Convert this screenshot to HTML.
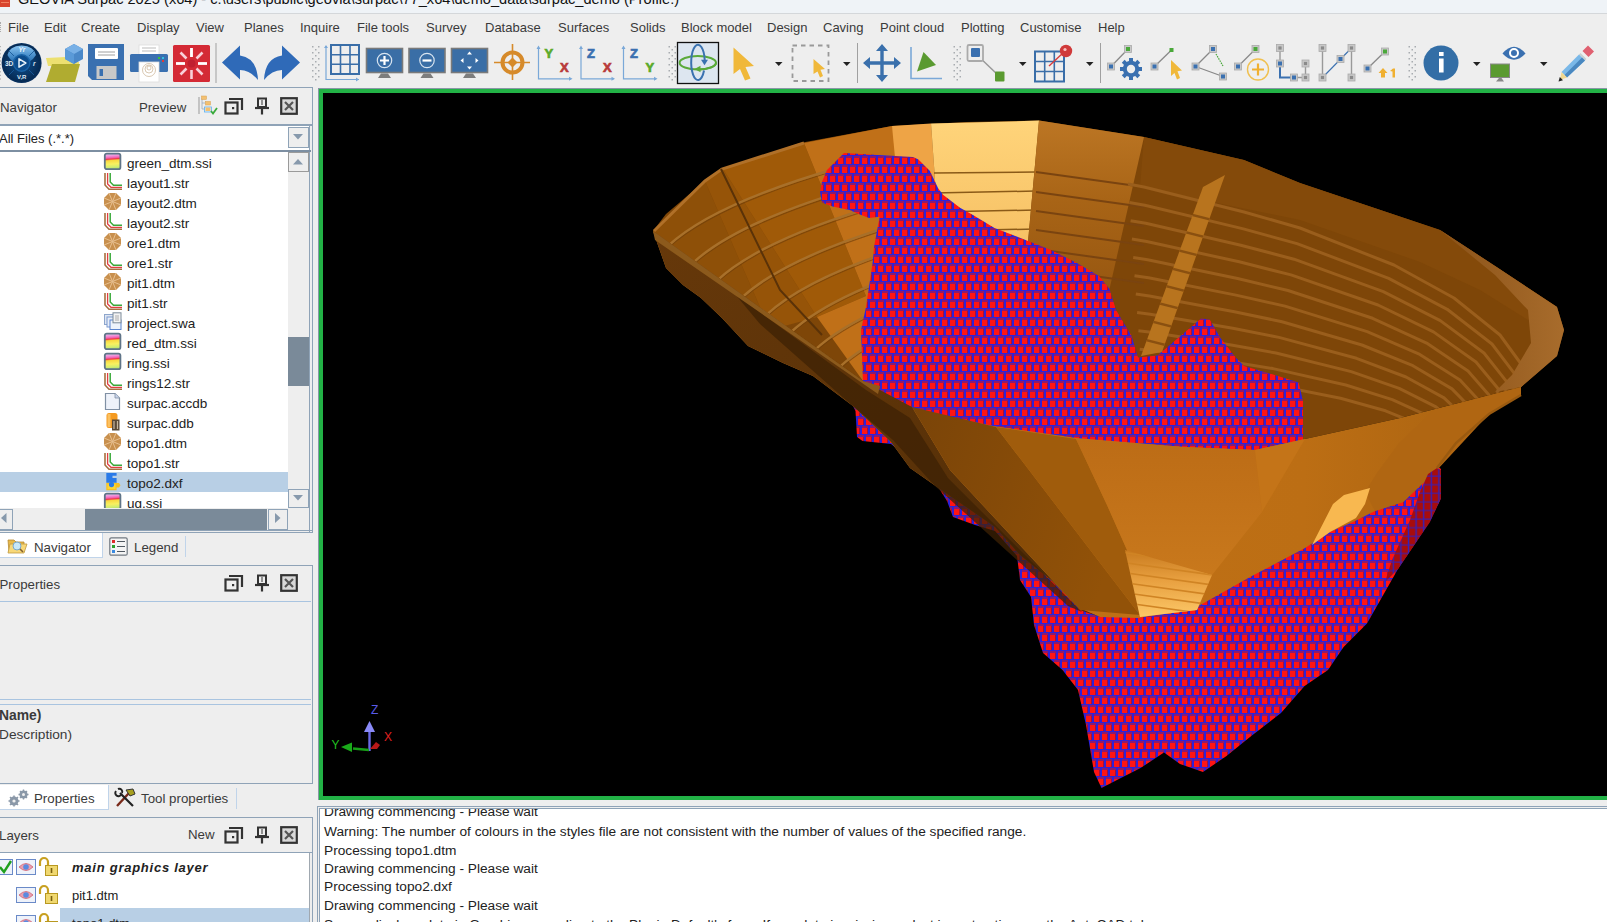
<!DOCTYPE html>
<html><head><meta charset="utf-8">
<style>
*{margin:0;padding:0;box-sizing:border-box}
html,body{width:1607px;height:922px;overflow:hidden;background:#eeeeee;font-family:"Liberation Sans",sans-serif;color:#333;}
.a{position:absolute}
svg.a{overflow:visible}
.t{position:absolute;white-space:nowrap;font-size:13px;line-height:13px}
.menu .t{top:21px;color:#3a3a3a}
.list .t{color:#222;font-size:13.5px}
.msg .t{color:#222;font-size:13.7px}
.hdr{color:#3a3a3a;font-size:13.3px}
</style></head><body>
<svg width="0" height="0" style="position:absolute">
<defs>
 <linearGradient id="g_ssi" x1="0" y1="0" x2="0.08" y2="1">
  <stop offset="0" stop-color="#d8d0f0"/><stop offset="0.18" stop-color="#f090d8"/><stop offset="0.3" stop-color="#f060b0"/><stop offset="0.38" stop-color="#f03848"/>
  <stop offset="0.47" stop-color="#f8d840"/><stop offset="0.7" stop-color="#f8f060"/><stop offset="0.9" stop-color="#d0ec70"/><stop offset="1" stop-color="#b0e070"/>
 </linearGradient>
 <symbol id="ic_ssi" viewBox="0 0 20 19">
  <rect x="1.8" y="1.6" width="15.6" height="15.6" rx="2" fill="url(#g_ssi)" stroke="#5f7488" stroke-width="1.8"/>
 </symbol>
 <symbol id="ic_str" viewBox="0 0 20 19">
  <path d="M2,1 V13 L6,17.3 H19" fill="none" stroke="#a87040" stroke-width="1.6"/>
  <path d="M4.6,1 V12 L8,15.3 H19" fill="none" stroke="#e04040" stroke-width="1.3"/>
  <path d="M7.2,1 V10 L10.5,13.3 H19" fill="none" stroke="#3aaa3a" stroke-width="1.5"/>
 </symbol>
 <symbol id="ic_dtm" viewBox="0 0 20 19">
  <path d="M6,1 H13 L18,6 V13 L13,18 H6 L1,13 V6 Z" fill="#c8904e"/>
  <path d="M6,1 L9.5,9.5 L13,1 M18,6 L9.5,9.5 L18,13 M13,18 L9.5,9.5 L6,18 M1,13 L9.5,9.5 L1,6" fill="none" stroke="#e8c090" stroke-width="1"/>
 </symbol>
 <symbol id="ic_swa" viewBox="0 0 20 19">
  <rect x="1.5" y="2.5" width="9" height="10" fill="#dfe6f2" stroke="#8ea6cc"/>
  <rect x="4" y="5" width="9" height="10" fill="#e8eef8" stroke="#7d9ad0"/>
  <rect x="7" y="8" width="11" height="9.5" fill="#eef3fb" stroke="#5b84cf"/>
  <rect x="10" y="0.8" width="8" height="10" fill="#f3f3f3" stroke="#7d8b99"/>
  <path d="M12,4 H16 M12,6 H16 M12,8 H16" stroke="#999" stroke-width="0.8"/>
 </symbol>
 <symbol id="ic_accdb" viewBox="0 0 20 19">
  <path d="M2.5,1.5 H12 L16.5,6 V17.5 H2.5 Z" fill="#eef2fa" stroke="#8090a4" stroke-width="1.2"/>
  <path d="M12,1.5 V6 H16.5" fill="#c8d4ea" stroke="#8090a4" stroke-width="0.8"/>
 </symbol>
 <symbol id="ic_ddb" viewBox="0 0 20 19">
  <rect x="3.5" y="1" width="11" height="15" rx="2.5" fill="#f59a20"/>
  <rect x="4.5" y="2" width="3" height="13" fill="#fbc060"/>
  <rect x="9" y="7.5" width="7.5" height="11" fill="#5a4a38"/>
  <path d="M11,9 V17 M14.5,9 V17" stroke="#c8b8a0" stroke-width="1.2"/>
 </symbol>
 <symbol id="ic_dxf" viewBox="0 0 20 19">
  <path d="M3.3,10.8 H14 V11 H16 L17.5,13.3 L16,15.6 H13.6 V18.3 H3.3 Z" fill="#f8c020"/>
  <path d="M4.5,12 H12.5 V17 H4.5 Z" fill="#fbe040" opacity="0.7"/>
  <path d="M3.3,1.1 H13.6 V3.8 H9.5 V6 H13.6 V10.8 H3.3 Z" fill="#2a7ae8"/>
  <circle cx="8.5" cy="12.6" r="2.6" fill="#2a7ae8"/>
 </symbol>
 <symbol id="ic_float" viewBox="0 0 20 18">
  <rect x="1.5" y="5.5" width="12" height="11" fill="none" stroke="#333" stroke-width="2.2"/>
  <path d="M5,2 H18 V13" fill="none" stroke="#333" stroke-width="2.2"/>
  <rect x="8" y="10" width="2.2" height="2.2" fill="#333"/>
 </symbol>
 <symbol id="ic_pin" viewBox="0 0 16 18">
  <path d="M4,1.5 H12 V10 H4 Z" fill="none" stroke="#333" stroke-width="2"/>
  <path d="M1,11 H15" stroke="#333" stroke-width="2.2"/>
  <path d="M8,11 V17.5" stroke="#333" stroke-width="2.2"/>
  <path d="M8,3 V8" stroke="#333" stroke-width="1"/>
 </symbol>
 <symbol id="ic_close" viewBox="0 0 18 18">
  <rect x="1.2" y="1.2" width="15.6" height="15.6" fill="#d8d8d8" stroke="#333" stroke-width="2.2"/>
  <path d="M5,5 L13,13 M13,5 L5,13" stroke="#555" stroke-width="2.2"/>
 </symbol>
 <pattern id="blk" width="8" height="18" patternUnits="userSpaceOnUse" x="1" y="2">
  <rect width="8" height="18" fill="#3020d8"/>
  <rect x="1" y="1" width="6" height="2" fill="#8a1a70"/>
  <rect x="1" y="3" width="5" height="6" fill="#ff1414"/>
  <rect x="6" y="3" width="1" height="6" fill="#a01040"/>
  <rect x="0" y="10" width="3" height="2" fill="#8a1a70"/><rect x="5" y="10" width="3" height="2" fill="#8a1a70"/>
  <rect x="0" y="12" width="2" height="6" fill="#ff1414"/><rect x="5" y="12" width="3" height="6" fill="#ff1414"/>
  <rect x="2" y="12" width="1" height="6" fill="#a01040"/>
 </pattern>
<pattern id="blkD" width="7.6" height="8.6" patternUnits="userSpaceOnUse" x="2" y="3">
  <rect width="7.6" height="8.6" fill="#3020c0"/>
  <rect x="1.2" y="0.6" width="6.2" height="7.6" fill="#a80c0c"/>
 </pattern>
</defs></svg>

<div class="a" style="left:0;top:0;width:1607px;height:13px;background:#eff3f7;overflow:hidden">
 <div class="a" style="left:0;top:0;width:10px;height:7px;background:#d9452f"></div>
 <div class="a" style="left:1px;top:2px;width:8px;height:1px;background:#f08060"></div>
 <div class="t" style="left:18px;top:-8.4px;font-size:14.6px;line-height:14.6px;color:#111">GEOVIA Surpac 2025 (x64) - c:\users\public\geovia\surpac\77_x64\demo_data\surpac_demo (Profile:)</div>
</div>
<div class="a" style="left:0;top:13px;width:1607px;height:1px;background:#d4d7da"></div>
<div class="menu">
<div class="a" style="left:0;top:22px;width:1px;height:10px;border-left:1px dotted #aaa"></div>
<div class="t" style="left:8px">File</div>
<div class="t" style="left:44px">Edit</div>
<div class="t" style="left:81px">Create</div>
<div class="t" style="left:137px">Display</div>
<div class="t" style="left:196px">View</div>
<div class="t" style="left:244px">Planes</div>
<div class="t" style="left:300px">Inquire</div>
<div class="t" style="left:357px">File tools</div>
<div class="t" style="left:426px">Survey</div>
<div class="t" style="left:485px">Database</div>
<div class="t" style="left:558px">Surfaces</div>
<div class="t" style="left:630px">Solids</div>
<div class="t" style="left:681px">Block model</div>
<div class="t" style="left:767px">Design</div>
<div class="t" style="left:823px">Caving</div>
<div class="t" style="left:880px">Point cloud</div>
<div class="t" style="left:961px">Plotting</div>
<div class="t" style="left:1020px">Customise</div>
<div class="t" style="left:1098px">Help</div>
</div>

<svg class="a" style="left:0;top:0" width="1607" height="88" viewBox="0 0 1607 88">
<defs>
 <radialGradient id="cmp2" cx="0.5" cy="0.5" r="0.5">
  <stop offset="0" stop-color="#0e4a86"/><stop offset="0.6" stop-color="#0a3a6c"/><stop offset="1" stop-color="#062a52"/>
 </radialGradient>
 <linearGradient id="cmpTop" x1="0" y1="0" x2="0" y2="1">
  <stop offset="0" stop-color="#8ac4f0"/><stop offset="0.6" stop-color="#4a90cc"/><stop offset="1" stop-color="#2a70b0"/>
 </linearGradient>
 <g id="grip" fill="#a8acb0"><rect x="0.5" y="0" width="1.5" height="1.5"/><rect x="6.5" y="0" width="1.5" height="1.5"/><rect x="3.5" y="3" width="1.5" height="1.5"/><rect x="0.5" y="6" width="1.5" height="1.5"/><rect x="6.5" y="6" width="1.5" height="1.5"/><rect x="3.5" y="9" width="1.5" height="1.5"/><rect x="0.5" y="12" width="1.5" height="1.5"/><rect x="6.5" y="12" width="1.5" height="1.5"/><rect x="3.5" y="15" width="1.5" height="1.5"/><rect x="0.5" y="18" width="1.5" height="1.5"/><rect x="6.5" y="18" width="1.5" height="1.5"/><rect x="3.5" y="21" width="1.5" height="1.5"/><rect x="0.5" y="24" width="1.5" height="1.5"/><rect x="6.5" y="24" width="1.5" height="1.5"/><rect x="3.5" y="27" width="1.5" height="1.5"/><rect x="0.5" y="30" width="1.5" height="1.5"/><rect x="6.5" y="30" width="1.5" height="1.5"/><rect x="3.5" y="33" width="1.5" height="1.5"/></g>
 <g id="mon"><rect x="0.5" y="0.5" width="36" height="24" fill="#3a6ea6" stroke="#7a7a7a" stroke-width="1.6"/><path d="M12,30 L15,25.5 H22 L25,30 Z" fill="#7d7d7d"/></g>
 <g id="dd"><path d="M0,0 H7.5 L3.75,4 Z" fill="#222"/></g>
 <g id="sq"><rect x="-3.5" y="-3.5" width="7" height="7" fill="#c8c8c8" stroke="#aaa" stroke-width="0.8"/><rect x="-2" y="-2" width="4" height="4" fill="#3a70b0"/></g>
 <g id="sqg"><rect x="-3.5" y="-3.5" width="7" height="7" fill="#c8c8c8" stroke="#aaa" stroke-width="0.8"/><rect x="-2" y="-2" width="4" height="4" fill="#4aa83a"/></g>
 <g id="sqx"><rect x="-3.5" y="-3.5" width="7" height="7" fill="#c8c8c8" stroke="#aaa" stroke-width="0.8"/><rect x="-1.6" y="-1.6" width="3.2" height="3.2" fill="#8a8a8a"/></g>
</defs>
<!-- grip at start of menu/toolbar -->
<path d="M0.5,46 V82" stroke="#b0b0b0" stroke-width="1" stroke-dasharray="1.2,2.4"/>
<!-- 1 compass -->
<circle cx="21.6" cy="63" r="20" fill="#08305e"/>
<circle cx="21.6" cy="63" r="19" fill="url(#cmp2)"/>
<path d="M7.5,55 Q9,46 21.6,45.5 Q34,46 36,55 Q33,60 29,62 A8.5,8.5 0 0 0 14,62 Q10,60 7.5,55 Z" fill="url(#cmpTop)"/>
<circle cx="21.6" cy="63" r="8.2" fill="#0c4c8c" stroke="#1a64a8" stroke-width="1.4"/>
<path d="M19,58.8 L25.8,63 L19,67.2 Z" fill="none" stroke="#e8f2fa" stroke-width="1.5" stroke-linejoin="round"/>
<path d="M9,51 L14,56 M34,51 L29,56 M9,75 L14,70 M34,75 L29,70" stroke="#1a5a98" stroke-width="0.9"/>
<text x="5" y="66" font-size="6.5" font-weight="bold" fill="#dfeaf6" font-family="Liberation Sans">3D</text>
<text x="17" y="79" font-size="6" font-weight="bold" fill="#dfeaf6" font-family="Liberation Sans">V,R</text>
<text x="18.5" y="51.5" font-size="6.5" font-style="italic" font-weight="bold" fill="#eef6fc" font-family="Liberation Sans">Yr</text>
<text x="33" y="66" font-size="6.5" font-style="italic" font-weight="bold" fill="#dfeaf6" font-family="Liberation Sans">r</text>
<!-- 2 folder + cube -->
<path d="M46,58 L66,57 L70,62 H79 L79,66 H48 Z" fill="#ece070"/>
<path d="M46,82 L52,64 H80 L75,82 Z" fill="#b0ac30"/>
<path d="M74,44 L83,49 L83,59 L74,64 L65,59 L65,49 Z" fill="#4a88c8"/>
<path d="M74,44 L83,49 L74,54 L65,49 Z" fill="#78b0e6"/>
<path d="M74,54 L74,64 L65,59 L65,49 Z" fill="#5a9ad8"/>
<!-- 3 save -->
<path d="M88,44 H124 V80 H92 L88,76 Z" fill="#3a70b0"/>
<rect x="95" y="48" width="23" height="11" rx="1" fill="#fff"/>
<path d="M98,52 H115 M98,55 H115" stroke="#a0a0a0" stroke-width="1"/>
<rect x="96.5" y="66" width="20" height="13" fill="#c8c8c8"/>
<rect x="99.5" y="69" width="3.5" height="7" fill="#3a70b0"/>
<!-- 4 printer -->
<rect x="139" y="45" width="20" height="10" fill="#fff" stroke="#ddd" stroke-width="0.8"/>
<path d="M142,48 H156 M142,51 H156" stroke="#aaa" stroke-width="0.8"/>
<rect x="130" y="54" width="38" height="18" rx="1.5" fill="#3a70b0"/>
<rect x="139" y="62" width="20" height="20" fill="#fff" stroke="#ddd" stroke-width="0.8"/>
<circle cx="149" cy="68" r="2" fill="none" stroke="#c8b090" stroke-width="0.7"/>
<circle cx="149" cy="69" r="4" fill="none" stroke="#c8b090" stroke-width="0.7"/>
<circle cx="149" cy="70" r="6.5" fill="none" stroke="#c8b090" stroke-width="0.7"/>
<rect x="158" y="57" width="2" height="2" fill="#3ac03a"/><rect x="162" y="57" width="2" height="2" fill="#30c0e0"/><rect x="162" y="60" width="2" height="2" fill="#e03a3a"/>
<!-- 5 red -->
<rect x="173" y="45" width="37" height="37" rx="1.5" fill="#d42a35"/>
<circle cx="191.5" cy="63.5" r="4" fill="#c02030"/>
<g stroke="#f8d0d8" stroke-width="2.6" stroke-linecap="butt">
<path d="M191.5,48 V57 M191.5,70 V79 M176,63.5 H185 M198,63.5 H207 M180.5,52.5 L186.5,58.5 M196.5,68.5 L202.5,74.5 M202.5,52.5 L196.5,58.5 M186.5,68.5 L180.5,74.5"/>
</g>
<g stroke="#ffffff" stroke-width="2.6"><path d="M191.5,48 V57 M198,63.5 H207 M176,63.5 H185"/></g>
<!-- sep -->
<path d="M216,43 V83" stroke="#a0a0a0" stroke-width="1"/>
<!-- 7 undo -->
<path d="M222,62.5 L240,45.5 V55.5 Q257,58 258,80 Q250,70 240,70 V79.5 Z" fill="#2f6ab8"/>
<!-- 8 redo -->
<path d="M300,62.5 L282,45.5 V55.5 Q265,58 264,80 Q272,70 282,70 V79.5 Z" fill="#2f6ab8"/>
<!-- grip -->
<use href="#grip" x="311.5" y="46"/>
<!-- 10 grid -->
<path d="M326,80 V46 M326,79.5 H359" stroke="#7aa8d8" stroke-width="1.2"/>
<path d="M324,48 L326,45 L328,48 Z M356,77.5 L359,79.5 L356,81.5 Z" fill="#7aa8d8"/>
<rect x="331" y="45" width="28" height="29" fill="none" stroke="#3a6ea8" stroke-width="2"/>
<path d="M340.5,45 V74 M350,45 V74 M331,54.7 H359 M331,64.3 H359" stroke="#3a6ea8" stroke-width="1.6"/>
<!-- 11-13 monitors -->
<use href="#mon" x="366" y="48"/>
<circle cx="384.5" cy="60.5" r="7.2" fill="none" stroke="#d8e4f0" stroke-width="1.2"/>
<path d="M384.5,56 V65 M380,60.5 H389" stroke="#fff" stroke-width="2.2"/>
<use href="#mon" x="408.5" y="48"/>
<circle cx="427" cy="60.5" r="7.2" fill="none" stroke="#d8e4f0" stroke-width="1.2"/>
<path d="M422.5,60.5 H431.5" stroke="#fff" stroke-width="2.2"/>
<use href="#mon" x="451" y="48"/>
<path d="M469.5,51.5 L472,54.5 H467 Z M469.5,69.5 L472,66.5 H467 Z M460.5,60.5 L463.5,58 V63 Z M478.5,60.5 L475.5,58 V63 Z" fill="#fff"/>
<!-- 14 target -->
<path d="M512.5,44 V80 M494,62.5 H530" stroke="#d68a2a" stroke-width="1.6"/>
<circle cx="512.5" cy="62.5" r="10" fill="none" stroke="#d68a2a" stroke-width="4"/>
<path d="M512.5,57.5 L517.5,62.5 L512.5,67.5 L507.5,62.5 Z" fill="#d68a2a"/>
<!-- 15-17 axes -->
<g id="axis"><path d="M538.5,47 V78.8 H571" stroke="#7aa8d8" stroke-width="1.2" fill="none"/><path d="M536.5,49 L538.5,45.5 L540.5,49 Z M569,76.8 L572.5,78.8 L569,80.8 Z" fill="#7aa8d8"/></g>
<use href="#axis" x="42.5"/><use href="#axis" x="85"/>
<text x="544.5" y="58" font-size="13" font-weight="bold" stroke-width="0.7" stroke="#5aaa2a" fill="#5aaa2a" font-family="Liberation Sans">Y</text>
<text x="560" y="72" font-size="13" font-weight="bold" stroke-width="0.7" stroke="#b83a3a" fill="#b83a3a" font-family="Liberation Sans">X</text>
<text x="587" y="58" font-size="13" font-weight="bold" stroke-width="0.7" stroke="#3a70b0" fill="#3a70b0" font-family="Liberation Sans">Z</text>
<text x="603" y="72" font-size="13" font-weight="bold" stroke-width="0.7" stroke="#b83a3a" fill="#b83a3a" font-family="Liberation Sans">X</text>
<text x="630" y="58" font-size="13" font-weight="bold" stroke-width="0.7" stroke="#3a70b0" fill="#3a70b0" font-family="Liberation Sans">Z</text>
<text x="645.5" y="72" font-size="13" font-weight="bold" stroke-width="0.7" stroke="#5aaa2a" fill="#5aaa2a" font-family="Liberation Sans">Y</text>
<use href="#grip" x="668" y="46"/>
<!-- 19 rotate -->
<rect x="677.5" y="42.5" width="41" height="41" fill="#dde6f0" stroke="#111" stroke-width="1.3"/>
<ellipse cx="697.8" cy="62.8" rx="18.2" ry="6.7" fill="none" stroke="#5aaa3a" stroke-width="2"/>
<path d="M704.76,60.5 A6.8,17.7 0 1 0 704.03,70.5" fill="none" stroke="#3a72b0" stroke-width="2"/>
<path d="M716.0,62.8 A18.2,6.7 0 0 1 699.5,69.47" fill="none" stroke="#5aaa3a" stroke-width="2"/>
<path d="M701,59.8 L708,59.8 L704.5,65.3 Z" fill="#3a72b0"/>
<path d="M694.5,69 L700.5,65.8 L700.5,72.2 Z" fill="#5aaa3a"/>
<!-- 20 cursor -->
<path d="M733.5,47.5 L754,66 L745.5,67 L750.5,78.5 L745,80.5 L740,69 L733.5,74 Z" fill="#f0b83a"/>
<use href="#dd" x="775" y="62"/>
<!-- 22 dashed box -->
<rect x="792.5" y="45.5" width="36" height="35.5" fill="none" stroke="#999" stroke-width="1.8" stroke-dasharray="4.5,4"/>
<path d="M813.5,59 L825,69 L820.5,69.8 L823,76 L820,77.5 L817.5,71.5 L813.5,74 Z" fill="#f0b83a"/>
<use href="#dd" x="843" y="62"/>
<path d="M857.5,43 V83" stroke="#a0a0a0" stroke-width="1"/>
<!-- 25 move -->
<path d="M882,47 V79 M866,63 H898" stroke="#3a70ac" stroke-width="3.4"/>
<path d="M882,44 L888,51 H876 Z M882,82 L888,75 H876 Z M863,63 L870,57 V69 Z M901,63 L894,57 V69 Z" fill="#3a70ac"/>
<!-- 26 axis-triangle -->
<path d="M911,47 V78.5 H942" stroke="#7aa8d8" stroke-width="1.6" fill="none"/>
<path d="M917,71.5 L923.5,52 L936,65 Z" fill="#5a9a30"/>
<use href="#grip" x="953" y="46"/>
<!-- 28 line squares -->
<path d="M976,54 L999,76" stroke="#999" stroke-width="1.5"/>
<rect x="967.5" y="45" width="15.5" height="16" rx="1.5" fill="#eee" stroke="#aaa" stroke-width="1.8"/>
<rect x="971" y="48" width="9" height="9" rx="1" fill="#3a70b0"/>
<rect x="995" y="71.5" width="9.5" height="10" rx="1" fill="#5a9a30"/>
<use href="#dd" x="1019" y="62"/>
<!-- 30 grid pin -->
<rect x="1035" y="51.5" width="29" height="30" fill="none" stroke="#3a6ea8" stroke-width="2"/>
<path d="M1044.7,51.5 V81.5 M1054.3,51.5 V81.5 M1035,61.5 H1064 M1035,71.5 H1064" stroke="#3a6ea8" stroke-width="1.6"/>
<path d="M1049,66 L1063,53" stroke="#d83a3a" stroke-width="1.4"/>
<circle cx="1066" cy="51" r="6.2" fill="#d03a3a"/>
<circle cx="1065" cy="49.5" r="1.6" fill="#f8c0c0"/>
<use href="#dd" x="1086" y="62"/>
<path d="M1100.5,43 V83" stroke="#a0a0a0" stroke-width="1"/>
<!-- 33 line-gear -->
<path d="M1111,66.5 L1128,49" stroke="#888" stroke-width="1.3"/>
<use href="#sq" x="1111" y="66.5"/><use href="#sqg" x="1128" y="49"/>
<g transform="translate(1131,69)" fill="#3a70b0">
<circle r="8.2"/>
<path d="M-2,-11 H2 V-7 H-2 Z" /><path d="M-2,-11 H2 V-7 H-2 Z" transform="rotate(45)"/><path d="M-2,-11 H2 V-7 H-2 Z" transform="rotate(90)"/><path d="M-2,-11 H2 V-7 H-2 Z" transform="rotate(135)"/>
<path d="M-2,-11 H2 V-7 H-2 Z" transform="rotate(180)"/><path d="M-2,-11 H2 V-7 H-2 Z" transform="rotate(225)"/><path d="M-2,-11 H2 V-7 H-2 Z" transform="rotate(270)"/><path d="M-2,-11 H2 V-7 H-2 Z" transform="rotate(315)"/>
<circle r="4.2" fill="#eeeeee"/>
</g>
<!-- 34 line cursor -->
<path d="M1154.5,66.5 L1171.5,50" stroke="#888" stroke-width="1.3"/>
<use href="#sq" x="1154.5" y="66.5"/>
<rect x="1169.5" y="48" width="4" height="4" fill="#4aa83a"/>
<path d="M1171,60 L1182,70.5 L1177.5,71.3 L1180,78 L1177,79.5 L1174.5,73 L1171,76 Z" fill="#f0b83a"/>
<!-- 35 triangle -->
<path d="M1195.5,66.5 L1213,49 M1195.5,66.5 L1223,76.5" stroke="#888" stroke-width="1.3"/>
<path d="M1216,54 L1223,66" stroke="#4aa83a" stroke-width="1.2" stroke-dasharray="1.5,1"/>
<use href="#sq" x="1195.5" y="66.5"/><use href="#sq" x="1213" y="49"/><use href="#sq" x="1223" y="76.5"/>
<!-- 36 line plus -->
<path d="M1238,66.5 L1255.5,49" stroke="#888" stroke-width="1.3"/>
<use href="#sq" x="1238" y="66.5"/><use href="#sqg" x="1255.5" y="49"/>
<circle cx="1258" cy="69.5" r="10.5" fill="none" stroke="#f0c050" stroke-width="1.4"/>
<path d="M1258,63.5 V75.5 M1252,69.5 H1264" stroke="#f0b030" stroke-width="2.2"/>
<!-- 37 L shape -->
<path d="M1280,48 V63.5" stroke="#999" stroke-width="1.4"/>
<path d="M1280,63.5 V77.5 H1294" stroke="#3a70b0" stroke-width="2" fill="none"/>
<path d="M1294,77.5 H1305.5 V63.5" stroke="#999" stroke-width="1.4" fill="none"/>
<use href="#sqx" x="1280" y="48"/><use href="#sq" x="1280" y="63.5"/><use href="#sq" x="1294" y="77.5"/><use href="#sqx" x="1305.5" y="77.5"/><use href="#sqx" x="1305.5" y="63.5"/>
<!-- 38 zigzag -->
<path d="M1322.5,48 V77.5 M1351.5,48 V77.5" stroke="#999" stroke-width="1.4"/>
<path d="M1322.5,77.5 L1351.5,48" stroke="#3a70b0" stroke-width="1.1"/>
<use href="#sqx" x="1322.5" y="48"/><use href="#sqx" x="1322.5" y="77.5"/><use href="#sqx" x="1351.5" y="48"/><use href="#sqx" x="1351.5" y="77.5"/><use href="#sq" x="1340.5" y="59"/>
<!-- 39 line up1 -->
<path d="M1367.5,68.5 L1385,51.5" stroke="#888" stroke-width="1.3"/>
<use href="#sq" x="1367.5" y="68.5"/><use href="#sqg" x="1385" y="51.5"/>
<path d="M1383,68 L1387.5,73 H1385 V77.5 H1381 V73 H1378.5 Z" fill="#f0b030"/>
<path d="M1390,71 L1393,68.5 H1395 V77.5 H1392.5 V71.5 Z" fill="#f0b030"/>
<use href="#grip" x="1408" y="46"/>
<!-- 41 info -->
<circle cx="1441" cy="63" r="17.5" fill="#336ea6"/>
<rect x="1439" y="52" width="4.6" height="4" fill="#fff"/>
<rect x="1439" y="58.5" width="4.6" height="14" fill="#fff"/>
<use href="#dd" x="1473" y="62"/>
<!-- 43 eye monitor -->
<path d="M1502.5,53.5 Q1514,40 1525.5,53.5 Q1514,66 1502.5,53.5 Z" fill="#3a70b0"/>
<circle cx="1514" cy="53" r="4" fill="none" stroke="#fff" stroke-width="2"/>
<rect x="1490.5" y="64" width="19" height="13.5" fill="#5a9a30" stroke="#888" stroke-width="1"/>
<path d="M1496,81.5 L1499,78 H1501.5 L1504,81.5 Z" fill="#888"/>
<use href="#dd" x="1540" y="62"/>
<!-- 45 pencil -->
<path d="M1582.5,51 L1588,45.5 L1594,51.5 L1588.5,57 Z" fill="#e06070"/>
<path d="M1580.5,53 L1586.5,59 L1585,60.5 L1579,54.5 Z" fill="#c8d0d0"/>
<path d="M1579,54.5 L1585,60.5 L1567,77.5 L1561.5,72 Z" fill="#7ab8e8"/>
<path d="M1582,57.5 L1585,60.5 L1567,77.5 L1564.5,75 Z" fill="#4a88c0"/>
<path d="M1561.5,72 L1567,77.5 L1560,80 Z" fill="#f0d890"/>
<path d="M1560,80 L1562,78.5 L1559,81.5 Z" fill="#222"/>
<path d="M1558.5,81.5 L1559.8,77 L1563,80.2 Z" fill="#222"/>
<!-- bottom toolbar border -->
</svg>

<div class="a" style="left:-1px;top:87px;width:314px;height:446px;border:1px solid #8fa3b7;background:#eeeeee"></div>
<div class="t hdr" style="left:0px;top:101px">Navigator</div>
<div class="t hdr" style="left:139px;top:100.6px">Preview</div>
<svg class="a" style="left:198px;top:95px" width="20" height="20" viewBox="0 0 20 20">
<path d="M1,2 V19" stroke="#999" stroke-width="1"/>
<path d="M4,3 V14 H8 M4,8 H8" stroke="#9ab" stroke-width="0.8" fill="none"/>
<rect x="3.5" y="1" width="5" height="3.5" fill="#f3c070" stroke="#d8a050" stroke-width="0.5"/>
<rect x="7.5" y="6.5" width="5" height="3.5" fill="#f3c070" stroke="#d8a050" stroke-width="0.5"/>
<rect x="6.5" y="12" width="7" height="5" fill="#dceefc" stroke="#5cb0f0" stroke-width="0.8"/>
<rect x="7.5" y="12.5" width="5" height="3.5" fill="#f3c070"/>
<path d="M13,16 L15,18.5 L19,13" stroke="#3aaa3a" stroke-width="1.8" fill="none"/>
</svg>
<svg class="a" style="left:224px;top:97px" width="20" height="18"><use href="#ic_float"/></svg><svg class="a" style="left:254px;top:97px" width="16" height="18"><use href="#ic_pin"/></svg><svg class="a" style="left:280px;top:97px" width="18" height="18"><use href="#ic_close"/></svg>
<div class="a" style="left:0;top:124px;width:312px;height:2px;background:#8fa3b7"></div>
<div class="a" style="left:0;top:126px;width:311px;height:26px;background:#fff;border-bottom:2px solid #7d8fa2"></div>
<div class="t" style="left:-1px;top:131.5px;color:#222">All Files (.*.*)</div>
<div class="a" style="left:288px;top:127px;width:21px;height:21px;background:#eeeeee;border:1px solid #8fa3b7"></div>
<svg class="a" style="left:293px;top:134px" width="11" height="6"><path d="M0,0 H10 L5,5.5 Z" fill="#8799ac"/></svg>
<div class="a" style="left:309px;top:126px;width:3px;height:406px;background:#eeeeee;border-left:1px solid #8fa3b7"></div>
<div class="a list" style="left:0;top:151px;width:288px;height:357px;background:#fff;overflow:hidden">
<div class="a" style="left:0;top:321px;width:288px;height:20px;background:#b8cfe5"></div>
<svg class="a" style="left:103px;top:1.2px" width="20" height="19"><use href="#ic_ssi"/></svg>
<div class="t" style="left:127px;top:6.4px">green_dtm.ssi</div>
<svg class="a" style="left:103px;top:21.2px" width="20" height="19"><use href="#ic_str"/></svg>
<div class="t" style="left:127px;top:26.4px">layout1.str</div>
<svg class="a" style="left:103px;top:41.2px" width="20" height="19"><use href="#ic_dtm"/></svg>
<div class="t" style="left:127px;top:46.4px">layout2.dtm</div>
<svg class="a" style="left:103px;top:61.2px" width="20" height="19"><use href="#ic_str"/></svg>
<div class="t" style="left:127px;top:66.4px">layout2.str</div>
<svg class="a" style="left:103px;top:81.2px" width="20" height="19"><use href="#ic_dtm"/></svg>
<div class="t" style="left:127px;top:86.4px">ore1.dtm</div>
<svg class="a" style="left:103px;top:101.2px" width="20" height="19"><use href="#ic_str"/></svg>
<div class="t" style="left:127px;top:106.4px">ore1.str</div>
<svg class="a" style="left:103px;top:121.2px" width="20" height="19"><use href="#ic_dtm"/></svg>
<div class="t" style="left:127px;top:126.4px">pit1.dtm</div>
<svg class="a" style="left:103px;top:141.2px" width="20" height="19"><use href="#ic_str"/></svg>
<div class="t" style="left:127px;top:146.4px">pit1.str</div>
<svg class="a" style="left:103px;top:161.2px" width="20" height="19"><use href="#ic_swa"/></svg>
<div class="t" style="left:127px;top:166.4px">project.swa</div>
<svg class="a" style="left:103px;top:181.2px" width="20" height="19"><use href="#ic_ssi"/></svg>
<div class="t" style="left:127px;top:186.4px">red_dtm.ssi</div>
<svg class="a" style="left:103px;top:201.2px" width="20" height="19"><use href="#ic_ssi"/></svg>
<div class="t" style="left:127px;top:206.4px">ring.ssi</div>
<svg class="a" style="left:103px;top:221.2px" width="20" height="19"><use href="#ic_str"/></svg>
<div class="t" style="left:127px;top:226.4px">rings12.str</div>
<svg class="a" style="left:103px;top:241.2px" width="20" height="19"><use href="#ic_accdb"/></svg>
<div class="t" style="left:127px;top:246.4px">surpac.accdb</div>
<svg class="a" style="left:103px;top:261.2px" width="20" height="19"><use href="#ic_ddb"/></svg>
<div class="t" style="left:127px;top:266.4px">surpac.ddb</div>
<svg class="a" style="left:103px;top:281.2px" width="20" height="19"><use href="#ic_dtm"/></svg>
<div class="t" style="left:127px;top:286.4px">topo1.dtm</div>
<svg class="a" style="left:103px;top:301.2px" width="20" height="19"><use href="#ic_str"/></svg>
<div class="t" style="left:127px;top:306.4px">topo1.str</div>
<svg class="a" style="left:103px;top:321.2px" width="20" height="19"><use href="#ic_dxf"/></svg>
<div class="t" style="left:127px;top:326.4px">topo2.dxf</div>
<svg class="a" style="left:103px;top:341.2px" width="20" height="19"><use href="#ic_ssi"/></svg>
<div class="t" style="left:127px;top:346.4px">ug.ssi</div>
</div>
<div class="a" style="left:288px;top:151px;width:21px;height:357px;background:#eeeeee"></div>
<div class="a" style="left:288px;top:152px;width:21px;height:20px;border:1px solid #9a9a9a;background:#eeeeee"></div>
<svg class="a" style="left:293px;top:159px" width="11" height="6"><path d="M0,5.5 H10 L5,0 Z" fill="#8799ac"/></svg>
<div class="a" style="left:288px;top:337px;width:21px;height:49px;background:#7a8a99"></div>
<div class="a" style="left:288px;top:489px;width:21px;height:19px;border:1px solid #8fa3b7;background:#eeeeee"></div>
<svg class="a" style="left:293px;top:495px" width="11" height="6"><path d="M0,0 H10 L5,5.5 Z" fill="#8799ac"/></svg>
<div class="a" style="left:0;top:508px;width:309px;height:22px;background:#eeeeee"></div>
<div class="a" style="left:-1px;top:509px;width:14px;height:21px;border:1px solid #8fa3b7;background:#eeeeee"></div>
<svg class="a" style="left:1px;top:513px" width="6" height="11"><path d="M5.5,0 V10 L0,5 Z" fill="#8799ac"/></svg>
<div class="a" style="left:85px;top:509px;width:182px;height:21px;background:#7a8a99"></div>
<div class="a" style="left:268px;top:509px;width:20px;height:21px;border:1px solid #8fa3b7;background:#eeeeee"></div>
<svg class="a" style="left:275px;top:513px" width="6" height="11"><path d="M0,0 V10 L5.5,5 Z" fill="#8799ac"/></svg>
<div class="a" style="left:0;top:530px;width:312px;height:1px;background:#8fa3b7"></div>
<div class="a" style="left:-1px;top:533px;width:104px;height:25px;background:#fff;border-right:1px solid #c0d4ea;border-bottom:1px solid #c0d4ea"></div>
<svg class="a" style="left:7px;top:536px" width="21" height="19" viewBox="0 0 21 19">
<path d="M1,4 H7 L9,6 H17 V16 H2 Z" fill="#e8b848" stroke="#b88a30" stroke-width="0.8"/>
<path d="M3,8 H20 L17,17 H1 Z" fill="#f8d878" stroke="#c09a40" stroke-width="0.8"/>
<circle cx="10" cy="10" r="4" fill="#c8e8f8" stroke="#7aa8c8" stroke-width="1"/>
<path d="M13,13 L16,16" stroke="#806030" stroke-width="1.6"/>
</svg>
<div class="t hdr" style="left:34px;top:541px">Navigator</div>
<svg class="a" style="left:109px;top:537px" width="20" height="20" viewBox="0 0 20 20">
<rect x="0.8" y="0.8" width="17.4" height="17.4" rx="1.5" fill="#f4f4f4" stroke="#707880" stroke-width="1.2"/>
<rect x="3" y="3" width="3" height="3" fill="#e02a2a"/><rect x="3" y="8" width="3" height="3" fill="#2aa02a"/><rect x="3" y="13" width="3" height="3" fill="#3a8ae0"/>
<path d="M8,4.5 H16 M8,9.5 H16 M8,14.5 H16" stroke="#505860" stroke-width="1.1"/>
</svg>
<div class="t hdr" style="left:134px;top:541px">Legend</div>
<div class="a" style="left:185px;top:536px;width:1px;height:21px;background:#c0d4ea"></div>
<div class="a" style="left:-1px;top:565px;width:314px;height:219px;border:1px solid #8fa3b7;background:#eeeeee"></div>
<div class="t hdr" style="left:-0.5px;top:577.8px">Properties</div>
<svg class="a" style="left:224px;top:574px" width="20" height="18"><use href="#ic_float"/></svg><svg class="a" style="left:254px;top:574px" width="16" height="18"><use href="#ic_pin"/></svg><svg class="a" style="left:280px;top:574px" width="18" height="18"><use href="#ic_close"/></svg>
<div class="a" style="left:0;top:601px;width:311px;height:1px;background:#a9c4e0"></div>
<div class="a" style="left:0;top:699px;width:311px;height:1px;background:#a9c4e0"></div>
<div class="a" style="left:0;top:704px;width:311px;height:1px;background:#a9c4e0"></div>
<div class="t" style="left:-1px;top:709px;font-weight:bold;color:#3a3a3a;font-size:13.9px">Name)</div>
<div class="t" style="left:-1px;top:727.5px;color:#3a3a3a;font-size:13.7px">Description)</div>
<div class="a" style="left:-1px;top:785px;width:110px;height:25px;background:#fff;border-right:1px solid #c0d4ea;border-bottom:1px solid #c0d4ea"></div>
<svg class="a" style="left:8px;top:789px" width="22" height="18" viewBox="0 0 22 18">
<circle cx="6" cy="12" r="4.5" fill="#8a98a8"/><circle cx="6" cy="12" r="1.6" fill="#eee"/>
<circle cx="15.5" cy="5.5" r="4" fill="#8a98a8"/><circle cx="15.5" cy="5.5" r="1.5" fill="#eee"/>
<path d="M6,6.5 V17.5 M0.5,12 H11.5 M2,8 L10,16 M10,8 L2,16" stroke="#8a98a8" stroke-width="1.5"/>
<path d="M15.5,0.5 V10.5 M10.5,5.5 H20.5 M12,2 L19,9 M19,2 L12,9" stroke="#8a98a8" stroke-width="1.4"/>
<circle cx="6" cy="12" r="1.6" fill="#eee"/><circle cx="15.5" cy="5.5" r="1.5" fill="#eee"/>
</svg>
<div class="t hdr" style="left:34px;top:792px">Properties</div>
<svg class="a" style="left:114px;top:788px" width="22" height="20" viewBox="0 0 22 20">
<path d="M3,18 L15,5" stroke="#7a2a1a" stroke-width="2.4"/>
<path d="M12,2 L19,1 L21,6 L16,8 Z" fill="#a8a020" stroke="#333" stroke-width="1"/>
<path d="M19,18 L6,5" stroke="#222" stroke-width="2.2"/>
<path d="M2,3 A3,3 0 0 0 7,7 M4,1 A3,3 0 0 1 8,5" stroke="#222" stroke-width="2" fill="none"/>
</svg>
<div class="t hdr" style="left:141px;top:792px">Tool properties</div>
<div class="a" style="left:236px;top:788px;width:1px;height:21px;background:#c0d4ea"></div>
<div class="a" style="left:-1px;top:817px;width:314px;height:120px;border:1px solid #8fa3b7;background:#eeeeee"></div>
<div class="t hdr" style="left:-1px;top:829px">Layers</div>
<div class="t hdr" style="left:188px;top:828px">New</div>
<svg class="a" style="left:224px;top:826px" width="20" height="18"><use href="#ic_float"/></svg><svg class="a" style="left:254px;top:826px" width="16" height="18"><use href="#ic_pin"/></svg><svg class="a" style="left:280px;top:826px" width="18" height="18"><use href="#ic_close"/></svg>
<div class="a" style="left:0;top:852px;width:312px;height:1px;background:#8fa3b7"></div>
<div class="a" style="left:0;top:853px;width:310px;height:69px;background:#fff;border-right:1px solid #a0a8b0;overflow:hidden">
<div class="a" style="left:60px;top:55px;width:250px;height:20px;background:#b8cfe5"></div>
<svg class="a" style="left:-1px;top:6px" width="15" height="17" viewBox="0 0 15 17">
<rect x="0.5" y="0.5" width="13" height="15" fill="#eef2fa" stroke="#6a8ac8"/>
<path d="M1,8 L5,13 L12,2" stroke="#20a020" stroke-width="2.4" fill="none"/></svg>
<svg class="a" style="left:16px;top:6px" width="21" height="17" viewBox="0 0 21 17">
<rect x="0.5" y="0.5" width="19" height="15" fill="#eef2fa" stroke="#6a8ac8" stroke-width="1"/>
<path d="M3,8 Q10,1 17,8 Q10,15 3,8 Z" fill="#e8a0b0" stroke="#d06070" stroke-width="0.8"/>
<circle cx="10" cy="8" r="2.8" fill="#5a8ae0"/>
</svg>
<svg class="a" style="left:38px;top:4px" width="21" height="20" viewBox="0 0 21 20">
<path d="M2,9 V5 A4,4 0 0 1 10,5 V9" fill="none" stroke="#c8a020" stroke-width="2.2"/>
<rect x="7.5" y="8.5" width="12" height="10" fill="#f0d870" stroke="#b89820" stroke-width="1"/>
<path d="M13.5,11 V16" stroke="#7a6010" stroke-width="1.6"/>
</svg>
<div class="t" style="left:72px;top:8px;font-weight:bold;font-style:italic;color:#222;letter-spacing:0.75px">main graphics layer</div>
<svg class="a" style="left:16px;top:34px" width="21" height="17" viewBox="0 0 21 17">
<rect x="0.5" y="0.5" width="19" height="15" fill="#eef2fa" stroke="#6a8ac8" stroke-width="1"/>
<path d="M3,8 Q10,1 17,8 Q10,15 3,8 Z" fill="#e8a0b0" stroke="#d06070" stroke-width="0.8"/>
<circle cx="10" cy="8" r="2.8" fill="#5a8ae0"/>
</svg>
<svg class="a" style="left:38px;top:32px" width="21" height="20" viewBox="0 0 21 20">
<path d="M2,9 V5 A4,4 0 0 1 10,5 V9" fill="none" stroke="#c8a020" stroke-width="2.2"/>
<rect x="7.5" y="8.5" width="12" height="10" fill="#f0d870" stroke="#b89820" stroke-width="1"/>
<path d="M13.5,11 V16" stroke="#7a6010" stroke-width="1.6"/>
</svg>
<div class="t" style="left:72px;top:36px;color:#222">pit1.dtm</div>
<svg class="a" style="left:16px;top:62px" width="21" height="17" viewBox="0 0 21 17">
<rect x="0.5" y="0.5" width="19" height="15" fill="#eef2fa" stroke="#6a8ac8" stroke-width="1"/>
<path d="M3,8 Q10,1 17,8 Q10,15 3,8 Z" fill="#e8a0b0" stroke="#d06070" stroke-width="0.8"/>
<circle cx="10" cy="8" r="2.8" fill="#5a8ae0"/>
</svg>
<svg class="a" style="left:38px;top:60px" width="21" height="20" viewBox="0 0 21 20">
<path d="M2,9 V5 A4,4 0 0 1 10,5 V9" fill="none" stroke="#c8a020" stroke-width="2.2"/>
<rect x="7.5" y="8.5" width="12" height="10" fill="#f0d870" stroke="#b89820" stroke-width="1"/>
<path d="M13.5,11 V16" stroke="#7a6010" stroke-width="1.6"/>
</svg>
<div class="t" style="left:72px;top:64px;color:#222">topo1.dtm</div>
</div>
<div class="a" style="left:0;top:150px;width:311px;height:2px;background:#7d8fa2"></div>

<div class="a" style="left:318px;top:88px;width:1289px;height:713px;border-top:1px solid #8a97a6;border-left:1px solid #8a97a6;border-bottom:1px solid #8a97a6;background:#22b246"></div>
<svg class="a" style="left:323px;top:93px;overflow:hidden" width="1284" height="703" viewBox="323 93 1284 703">
<rect x="323" y="93" width="1284" height="703" fill="#000"/>

<defs>
<clipPath id="cInt"><polygon points="653.0,231.0 666.0,214.0 705.0,181.0 722.0,169.0 800.0,143.0 892.0,126.0 966.0,122.0 1039.0,120.6 1144.0,137.0 1244.0,160.0 1300.0,183.0 1440.0,230.0 1495.0,266.0 1557.0,307.0 1564.0,330.0 1557.0,356.0 1521.0,387.0 1521.0,387.0 1400.0,418.0 1305.0,439.0 1255.0,450.0 1184.0,447.0 1076.0,438.0 993.0,426.0 911.0,409.0 863.0,381.0 653.0,231.0"/></clipPath>
<linearGradient id="gBand" x1="0" y1="0" x2="1" y2="1"><stop offset="0" stop-color="#66380a"/><stop offset="0.6" stop-color="#5a3208"/><stop offset="1" stop-color="#4a2806"/></linearGradient>
<linearGradient id="gLip" x1="0" y1="0" x2="1" y2="0"><stop offset="0" stop-color="#8a5218"/><stop offset="1" stop-color="#a86c2c"/></linearGradient>
<linearGradient id="gLight" x1="0" y1="0" x2="0" y2="1"><stop offset="0" stop-color="#ffd47a"/><stop offset="1" stop-color="#f6c064"/></linearGradient>
<linearGradient id="gConeR" x1="0" y1="0" x2="1" y2="0"><stop offset="0" stop-color="#c47418"/><stop offset="0.75" stop-color="#bc6e14"/><stop offset="1" stop-color="#a86210"/></linearGradient>
<linearGradient id="gConeM" x1="0" y1="0" x2="0" y2="1"><stop offset="0" stop-color="#bc6c16"/><stop offset="1" stop-color="#cc7c1e"/></linearGradient>
<linearGradient id="gF1" x1="0" y1="0" x2="1" y2="0.3"><stop offset="0" stop-color="#7a4408"/><stop offset="1" stop-color="#925208"/></linearGradient>
<linearGradient id="gMedP" x1="0" y1="0" x2="0" y2="1"><stop offset="0" stop-color="#bc7624"/><stop offset="0.45" stop-color="#a86416"/><stop offset="1" stop-color="#965610"/></linearGradient>
<linearGradient id="gStreak" x1="0" y1="0" x2="0" y2="1"><stop offset="0" stop-color="#c87a1e"/><stop offset="0.45" stop-color="#e8a040"/><stop offset="1" stop-color="#fcc868"/></linearGradient>
</defs>
<polygon points="653.0,231.0 666.0,214.0 705.0,181.0 722.0,169.0 800.0,143.0 892.0,126.0 966.0,122.0 1039.0,120.6 1144.0,137.0 1244.0,160.0 1300.0,183.0 1440.0,230.0 1495.0,266.0 1557.0,307.0 1564.0,330.0 1557.0,356.0 1521.0,387.0 1521.0,387.0 1400.0,418.0 1305.0,439.0 1255.0,450.0 1184.0,447.0 1076.0,438.0 993.0,426.0 911.0,409.0 863.0,381.0 653.0,231.0" fill="#7e4608" />
<polygon points="1144.0,137.0 1244.0,160.0 1300.0,183.0 1440.0,230.0 1495.0,266.0 1557.0,307.0 1528.0,320.0 1480.0,290.0 1420.0,262.0 1300.0,220.0 1140.0,187.0" fill="#844a0a" />
<polygon points="653.0,231.0 705.0,181.0 770.0,330.0 863.0,381.0" fill="#8e5008" />
<polygon points="705.0,181.0 723.0,169.0 817.0,317.0 770.0,330.0" fill="#965408" />
<polygon points="723.0,169.0 804.0,143.0 866.0,296.0 817.0,317.0" fill="#a05a08" />
<polygon points="804.0,143.0 892.0,126.0 940.0,250.0 900.0,300.0 880.0,385.0 863.0,381.0 817.0,317.0 866.0,296.0" fill="#c07018" />
<path d="M654,231 L705,181 L722,169 L804,143" stroke="#b07028" stroke-width="3" fill="none"/>
<polygon points="892.0,126.0 931.0,123.5 940.0,250.0 905.0,262.0" fill="#eea446" />
<polygon points="931.0,123.5 1039.0,120.6 1028.0,242.0 940.0,250.0" fill="url(#gLight)" />
<path d="M934,173 L1036,172" stroke="#8a5a18" stroke-width="1.5"/>
<path d="M934,193 L1036,191" stroke="#8a5a18" stroke-width="1.5"/>
<path d="M934,212 L1036,210" stroke="#8a5a18" stroke-width="1.5"/>
<path d="M934,231 L1036,229" stroke="#8a5a18" stroke-width="1.5"/>
<polygon points="1039.0,120.6 1144.0,137.0 1107.0,300.0 1028.0,242.0" fill="url(#gMedP)" />
<path d="M1036,172 L1144,187" stroke="#7a4410" stroke-width="2" fill="none"/>
<path d="M1036,192 L1144,207" stroke="#7a4410" stroke-width="2" fill="none"/>
<path d="M1036,211 L1144,226" stroke="#7a4410" stroke-width="2" fill="none"/>
<path d="M1036,230 L1144,245" stroke="#7a4410" stroke-width="2" fill="none"/>
<path d="M1036,249 L1144,264" stroke="#7a4410" stroke-width="2" fill="none"/>
<path d="M1036,268 L1144,283" stroke="#7a4410" stroke-width="2" fill="none"/>
<g clip-path="url(#cInt)">
<path d="M1128.0,184.0 L1144.0,187.0 L1244.0,212.0 L1300.0,228.0 L1394.0,265.0 L1454.0,298.0 L1500.0,335.0 L1524.0,368.0 L1521.0,395.0 L1480.0,420.0" stroke="#9a5e1c" stroke-width="3" fill="none" stroke-linejoin="round"/>
<path d="M1129.3,202.4 L1144.9,205.2 L1242.4,228.6 L1297.0,243.6 L1388.7,278.3 L1447.2,309.3 L1492.0,344.0 L1515.4,374.9 L1512.5,400.3 L1472.5,423.7" stroke="#9a5e1c" stroke-width="3" fill="none" stroke-linejoin="round"/>
<path d="M1130.6,220.7 L1145.8,223.3 L1240.8,245.2 L1294.0,259.2 L1383.3,291.7 L1440.3,320.6 L1484.0,353.0 L1506.8,381.9 L1504.0,405.5 L1465.0,427.4" stroke="#9a5e1c" stroke-width="3" fill="none" stroke-linejoin="round"/>
<path d="M1131.9,239.1 L1146.7,241.5 L1239.2,261.8 L1291.0,274.9 L1378.0,305.0 L1433.5,331.9 L1476.0,362.0 L1498.2,388.8 L1495.4,410.8 L1457.5,431.2" stroke="#9a5e1c" stroke-width="3" fill="none" stroke-linejoin="round"/>
<path d="M1133.2,257.4 L1147.6,259.7 L1237.6,278.5 L1288.0,290.5 L1372.6,318.3 L1426.6,343.1 L1468.0,371.0 L1489.6,395.8 L1486.9,416.1 L1450.0,434.9" stroke="#9a5e1c" stroke-width="3" fill="none" stroke-linejoin="round"/>
<path d="M1134.5,275.8 L1148.5,277.8 L1236.0,295.1 L1285.0,306.1 L1367.2,331.6 L1419.8,354.4 L1460.0,379.9 L1481.0,402.7 L1478.4,421.4 L1442.5,438.6" stroke="#9a5e1c" stroke-width="3" fill="none" stroke-linejoin="round"/>
<path d="M1135.8,294.1 L1149.4,296.0 L1234.4,311.7 L1282.0,321.7 L1361.9,345.0 L1412.9,365.7 L1452.0,388.9 L1472.4,409.7 L1469.8,426.6 L1435.0,442.3" stroke="#9a5e1c" stroke-width="3" fill="none" stroke-linejoin="round"/>
<path d="M1137.1,312.5 L1150.3,314.2 L1232.8,328.3 L1279.0,337.4 L1356.5,358.3 L1406.0,377.0 L1444.0,397.9 L1463.8,416.6 L1461.3,431.9 L1427.5,446.0" stroke="#9a5e1c" stroke-width="3" fill="none" stroke-linejoin="round"/>
<path d="M1138.4,330.8 L1151.2,332.3 L1231.2,344.9 L1276.0,353.0 L1351.2,371.6 L1399.2,388.3 L1436.0,406.9 L1455.2,423.6 L1452.8,437.2 L1420.0,449.8" stroke="#9a5e1c" stroke-width="3" fill="none" stroke-linejoin="round"/>
<path d="M1139.7,349.2 L1152.1,350.5 L1229.6,361.5 L1273.0,368.6 L1345.8,385.0 L1392.3,399.6 L1428.0,415.9 L1446.6,430.5 L1444.3,442.4 L1412.5,453.5" stroke="#9a5e1c" stroke-width="3" fill="none" stroke-linejoin="round"/>
<path d="M1141.0,367.5 L1153.0,368.7 L1228.0,378.2 L1270.0,384.2 L1340.5,398.3 L1385.5,410.8 L1420.0,424.9 L1438.0,437.4 L1435.8,447.7 L1405.0,457.2" stroke="#9a5e1c" stroke-width="3" fill="none" stroke-linejoin="round"/>
<polygon points="1203.0,187.0 1225.0,175.0 1162.0,352.0 1141.0,356.0" fill="#b8741e" />
<clipPath id="cCol"><polygon points="1203,187 1225,175 1162,352 1141,356"/></clipPath><g clip-path="url(#cCol)">
<path d="M1130,199 L1240,227" stroke="#8a5010" stroke-width="2.4"/>
<path d="M1130,218 L1240,246" stroke="#8a5010" stroke-width="2.4"/>
<path d="M1130,238 L1240,266" stroke="#8a5010" stroke-width="2.4"/>
<path d="M1130,258 L1240,286" stroke="#8a5010" stroke-width="2.4"/>
<path d="M1130,277 L1240,305" stroke="#8a5010" stroke-width="2.4"/>
<path d="M1130,296 L1240,324" stroke="#8a5010" stroke-width="2.4"/>
<path d="M1130,316 L1240,344" stroke="#8a5010" stroke-width="2.4"/>
<path d="M1130,336 L1240,364" stroke="#8a5010" stroke-width="2.4"/>
<path d="M1130,355 L1240,383" stroke="#8a5010" stroke-width="2.4"/>
</g>
</g>
<polygon points="1440.0,230.0 1495.0,266.0 1557.0,307.0 1564.0,330.0 1557.0,356.0 1521.0,387.0 1495.0,392.0 1512.0,375.0 1531.0,343.0 1528.0,310.0 1495.0,275.0" fill="url(#gLip)" />
<g clip-path="url(#cInt)">
<path d="M668.0,248.0 Q713.0,206.0 838.0,170.0" stroke="#6a3c0a" stroke-width="1.2" fill="none" opacity="0.6"/>
<path d="M668.0,246.0 Q713.0,204.0 838.0,168.0" stroke="#a8702a" stroke-width="2.4" fill="none"/>
<path d="M692.5,265.3 Q737.5,223.3 862.5,187.3" stroke="#6a3c0a" stroke-width="1.2" fill="none" opacity="0.6"/>
<path d="M692.5,263.3 Q737.5,221.3 862.5,185.3" stroke="#a8702a" stroke-width="2.4" fill="none"/>
<path d="M717.0,282.6 Q762.0,240.60000000000002 887.0,204.60000000000002" stroke="#6a3c0a" stroke-width="1.2" fill="none" opacity="0.6"/>
<path d="M717.0,280.6 Q762.0,238.60000000000002 887.0,202.60000000000002" stroke="#a8702a" stroke-width="2.4" fill="none"/>
<path d="M741.5,299.9 Q786.5,257.9 911.5,221.89999999999998" stroke="#6a3c0a" stroke-width="1.2" fill="none" opacity="0.6"/>
<path d="M741.5,297.9 Q786.5,255.89999999999998 911.5,219.89999999999998" stroke="#a8702a" stroke-width="2.4" fill="none"/>
<path d="M766.0,317.2 Q811.0,275.2 936.0,239.2" stroke="#6a3c0a" stroke-width="1.2" fill="none" opacity="0.6"/>
<path d="M766.0,315.2 Q811.0,273.2 936.0,237.2" stroke="#a8702a" stroke-width="2.4" fill="none"/>
<path d="M790.5,334.5 Q835.5,292.5 960.5,256.5" stroke="#6a3c0a" stroke-width="1.2" fill="none" opacity="0.6"/>
<path d="M790.5,332.5 Q835.5,290.5 960.5,254.5" stroke="#a8702a" stroke-width="2.4" fill="none"/>
<path d="M815.0,351.8 Q860.0,309.8 985.0,273.8" stroke="#6a3c0a" stroke-width="1.2" fill="none" opacity="0.6"/>
<path d="M815.0,349.8 Q860.0,307.8 985.0,271.8" stroke="#a8702a" stroke-width="2.4" fill="none"/>
<path d="M839.5,369.1 Q884.5,327.1 1009.5,291.1" stroke="#6a3c0a" stroke-width="1.2" fill="none" opacity="0.6"/>
<path d="M839.5,367.1 Q884.5,325.1 1009.5,289.1" stroke="#a8702a" stroke-width="2.4" fill="none"/>
</g>
<path d="M721,169 L780,290 L822,335" stroke="#5a3208" stroke-width="2" fill="none"/>
<polygon points="863.0,383.0 861.0,330.0 866.0,307.0 873.0,260.0 874.0,247.0 879.4,218.0 879.4,216.8 869.0,218.0 858.6,214.0 849.5,210.0 832.5,206.4 822.0,202.5 820.0,192.0 822.0,181.7 827.0,170.0 844.0,153.0 913.0,157.0 918.5,159.5 930.0,171.0 938.0,188.0 943.0,194.7 960.0,207.7 973.0,215.0 994.5,228.0 1018.0,237.0 1051.0,250.0 1077.0,263.0 1099.0,276.0 1109.5,289.0 1116.0,310.0 1131.6,336.0 1138.0,357.6 1157.6,355.4 1201.0,318.6 1209.7,319.6 1220.5,338.0 1235.7,357.6 1244.0,366.0 1274.7,375.0 1298.6,382.5 1303.0,401.0 1303.0,441.0 1255.0,452.0 1184.0,449.0 1076.0,440.0 993.0,428.0 911.0,411.0" fill="url(#blk)" />
<polygon points="850.0,400.0 855.5,411.0 857.0,437.0 862.5,441.0 891.0,444.0 905.0,455.0 933.0,466.0 937.0,485.0 947.0,501.0 953.0,517.0 975.0,525.0 995.0,531.0 1017.0,556.0 1020.0,580.0 1031.0,597.0 1034.0,625.0 1043.0,653.0 1062.5,670.0 1078.0,690.0 1086.0,725.0 1094.0,772.0 1101.5,788.0 1117.0,780.0 1140.6,768.0 1164.0,752.5 1180.0,764.0 1203.0,772.0 1226.5,756.0 1250.0,737.0 1281.0,713.0 1304.6,686.0 1328.0,670.0 1343.6,647.0 1367.0,623.5 1398.0,569.0 1429.5,522.0 1441.0,498.6 1441.0,469.0 1437.0,466.0 1140.0,560.0 950.0,470.0" fill="url(#blk)" />
<polygon points="653.0,231.0 863.0,381.0 911.0,409.0 993.0,426.0 1076.0,438.0 1184.0,447.0 1255.0,450.0 1305.0,439.0 1400.0,418.0 1521.0,387.0 1521.0,395.0 1489.0,414.0 1456.0,445.0 1437.0,470.0 1403.0,502.0 1375.0,511.0 1353.0,522.0 1330.0,532.0 1305.0,548.0 1250.0,577.0 1195.0,608.0 1138.0,618.0 1100.0,617.0 1079.0,608.0 1051.0,580.0 1020.0,555.0 995.0,527.0 950.0,496.0 910.0,468.0 891.0,442.0 853.0,406.0 813.0,376.0 783.0,363.0 748.0,346.0 722.0,318.0 701.0,298.0 683.0,285.0 666.0,268.0 653.0,231.0" fill="url(#gConeR)" />
<polygon points="653.0,231.0 863.0,381.0 912.0,407.0 950.0,470.0 1080.0,610.0 1100.0,617.0 1079.0,608.0 1051.0,580.0 1020.0,555.0 995.0,527.0 950.0,496.0 910.0,468.0 891.0,442.0 853.0,406.0 813.0,376.0 783.0,363.0 748.0,346.0 722.0,318.0 701.0,298.0 683.0,285.0 666.0,268.0 653.0,231.0" fill="url(#gBand)" />
<polygon points="735.0,294.0 866.0,390.0 910.0,418.0 948.0,478.0 1082.0,612.0 1068.0,606.0 935.0,486.0 893.0,440.0 855.0,408.0 760.0,324.0" fill="#3e2204" opacity="0.75"/>
<polygon points="653.0,231.0 863.0,381.0 880.0,386.0 878.0,394.0 655.0,240.0" fill="#8c5a1c" />
<polygon points="912.0,407.0 996.0,427.0 1140.0,615.0 1080.0,610.0 950.0,470.0" fill="url(#gF1)" />
<polygon points="996.0,427.0 1076.0,439.0 1107.0,505.0 1127.0,550.0 1140.0,615.0" fill="#a05c0c" />
<polygon points="1076.0,439.0 1184.0,447.0 1255.0,450.0 1262.0,512.0 1212.0,575.0 1197.0,610.0 1140.0,617.0 1127.0,550.0 1107.0,505.0" fill="url(#gConeM)" />
<polygon points="1255.0,450.0 1305.0,439.0 1262.0,512.0" fill="#c47418" />
<polygon points="1434.0,410.0 1521.0,387.0 1521.0,395.0 1489.0,414.0 1437.0,470.0 1403.0,502.0 1375.0,511.0 1365.0,492.0 1377.0,473.0 1399.0,443.0" fill="#b06612" />
<polygon points="1125.0,550.0 1212.0,575.0 1197.0,610.0 1140.0,617.0" fill="url(#gStreak)" />
<clipPath id="cStreak"><polygon points="1125,550 1212,575 1197,610 1140,617"/></clipPath><g clip-path="url(#cStreak)">
<path d="M1120,552 L1220,566" stroke="#d08424" stroke-width="1.6"/>
<path d="M1120,562 L1220,576" stroke="#d08424" stroke-width="1.6"/>
<path d="M1120,572 L1220,586" stroke="#d08424" stroke-width="1.6"/>
<path d="M1120,582 L1220,596" stroke="#d08424" stroke-width="1.6"/>
<path d="M1120,592 L1220,606" stroke="#d08424" stroke-width="1.6"/>
<path d="M1120,602 L1220,616" stroke="#d08424" stroke-width="1.6"/>
</g>
<polygon points="1312.0,545.0 1333.0,504.0 1344.0,495.0 1370.0,488.0 1365.0,504.0 1356.0,518.0 1330.0,532.0" fill="#f8b850" />
<polygon points="1437.0,468.0 1441.0,470.0 1441.0,498.0 1430.0,522.0 1398.0,569.0 1385.0,582.0 1392.0,560.0 1410.0,520.0 1420.0,492.0 1428.0,474.0" fill="url(#blkD)" />
<path d="M1521,395 L1489,414 L1456,443 L1437,468" stroke="#9a5a10" stroke-width="2.5" fill="none"/>
<g font-family="Liberation Sans" font-size="12">
<path d="M369.5,751 V730" stroke="#6a6ae8" stroke-width="2.4"/>
<path d="M364,732 L369.5,721 L375,732 Z" fill="#8a8af8"/>
<path d="M369,750 L353,748.5" stroke="#18a018" stroke-width="2.6"/>
<path d="M341,747 L352,742.5 L352,752 Z" fill="#1aaa1a"/>
<path d="M370,749 L376,742 L380,745 L377,749 Z" fill="#b81818"/>
<text x="371" y="713.5" fill="#5a5ae8">Z</text>
<text x="384" y="740.5" fill="#e02020">X</text>
<text x="331.5" y="748.5" fill="#20c020">Y</text>
</g>

</svg>

<div class="a" style="left:312px;top:800px;width:1295px;height:6px;background:#eeeeee"></div>
<div class="a msg" style="left:317px;top:806px;width:1290px;height:116px;border-top:1px solid #8fa3b7;border-left:1px solid #8fa3b7;background:#eeeeee">
 <div class="a" style="left:1px;top:1px;width:1289px;height:115px;background:#fff;border-left:1px solid #8fa3b7;border-top:1px solid #8fa3b7;overflow:hidden">
  <div class="t" style="left:4px;top:-3.6px">Drawing commencing - Please wait</div>
  <div class="t" style="left:4px;top:16.2px">Warning: The number of colours in the styles file are not consistent with the number of values of the specified range.</div>
  <div class="t" style="left:4px;top:34.6px">Processing topo1.dtm</div>
  <div class="t" style="left:4px;top:52.8px">Drawing commencing - Please wait</div>
  <div class="t" style="left:4px;top:71.4px">Processing topo2.dxf</div>
  <div class="t" style="left:4px;top:90px">Drawing commencing - Please wait</div>
  <div class="t" style="left:4px;top:108.6px">Surpac displays data in Graphics according to the Plugin Default's form. If any data is missing, select import options on the AutoCAD tab.</div>
 </div>
</div>

</body></html>
